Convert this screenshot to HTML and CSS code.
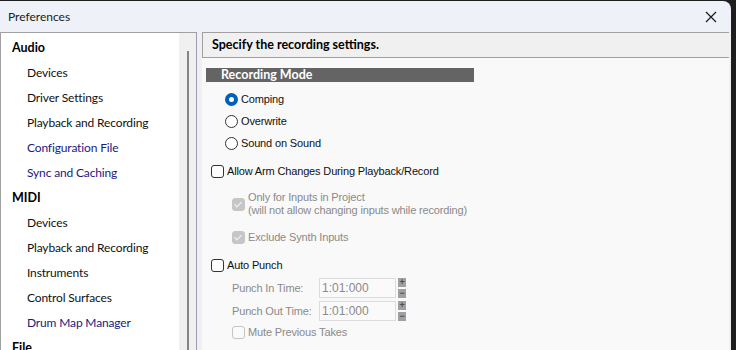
FILE: index.html
```html
<!DOCTYPE html>
<html lang="en">
<head>
    <meta charset="UTF-8">
    <title>Preferences</title>
    <link rel="stylesheet" href="styles.css">
</head>
<body>
    <div class="window">
        <div class="titlebar">
            <span class="title">Preferences</span>
            <svg class="close" width="12" height="12" viewBox="0 0 12 12">
                <path d="M1 1 L11 11 M11 1 L1 11" stroke="#1a1a1a" stroke-width="1.2"/>
            </svg>
        </div>

        <div class="panes">
            <div class="nav">
                <ul class="nav-list">
                    <li class="group">Audio</li>
                    <li>Devices</li>
                    <li>Driver Settings</li>
                    <li>Playback and Recording</li>
                    <li class="link">Configuration File</li>
                    <li class="link">Sync and Caching</li>
                    <li class="group">MIDI</li>
                    <li>Devices</li>
                    <li>Playback and Recording</li>
                    <li>Instruments</li>
                    <li>Control Surfaces</li>
                    <li class="link">Drum Map Manager</li>
                    <li class="group">File</li>
                </ul>
                <div class="scrollbar"><div class="thumb"></div></div>
            </div>

            <div class="main">
                <div class="header">Specify the recording settings.</div>
                <div class="content">
                    <div class="section-bar">Recording Mode</div>

                    <div class="radios">
                        <label class="opt"><span class="radio checked"></span>Comping</label>
                        <label class="opt"><span class="radio"></span>Overwrite</label>
                        <label class="opt"><span class="radio"></span>Sound on Sound</label>
                    </div>

                    <label class="opt check-row"><span class="box"></span>Allow Arm Changes During Playback/Record</label>

                    <div class="sub">
                        <label class="opt disabled two-line"><span class="box dis-checked"></span><span>Only for Inputs in Project<br>(will not allow changing inputs while recording)</span></label>
                        <label class="opt disabled excl"><span class="box dis-checked"></span>Exclude Synth Inputs</label>
                    </div>

                    <label class="opt check-row punch"><span class="box"></span>Auto Punch</label>

                    <div class="sub punch-fields">
                        <div class="field">
                            <span class="field-label">Punch In Time:</span>
                            <span class="time-input">1:01:000</span>
                            <span class="spin"><span class="spin-up">+</span><span class="spin-down">&minus;</span></span>
                        </div>
                        <div class="field">
                            <span class="field-label">Punch Out Time:</span>
                            <span class="time-input">1:01:000</span>
                            <span class="spin"><span class="spin-up">+</span><span class="spin-down">&minus;</span></span>
                        </div>
                        <label class="opt disabled mute"><span class="box dis-empty"></span>Mute Previous Takes</label>
                    </div>
                </div>
            </div>
        </div>
    </div>
</body>
</html>
```

FILE: styles.css
```css
* {
    margin: 0;
    padding: 0;
    box-sizing: border-box;
}

body {
    background: #1e1e1e;
    font-family: Lato, 'Noto Sans', sans-serif;
    font-size: 12px;
    color: #111;
    overflow: hidden;
}

.window {
    width: 731px;
    height: 352px;
    margin-top: 1px;
    background: #eff1f8;
    border-top-right-radius: 8px;
    display: flex;
    flex-direction: column;
    overflow: hidden;
}

.titlebar {
    height: 31px;
    display: flex;
    align-items: center;
    justify-content: space-between;
    padding: 0 14px 0 8px;
    flex-shrink: 0;
}

.title {
    font-size: 12px;
    color: #1a1a1a;
}

.close {
    margin-top: 1px;
}

.panes {
    flex: 1;
    display: flex;
    background: #f0f0f0;
}

/* left tree */
.nav {
    width: 197px;
    display: flex;
    background: #fff;
    border-top: 1px solid #a0a0a0;
    border-right: 1px solid #9a9ab4;
    border-left: 1px solid #a0a0a0;
}

.nav-list {
    list-style: none;
    flex: 1;
    padding-top: 2px;
}

.nav-list li {
    height: 25px;
    line-height: 25px;
    padding-left: 26px;
    white-space: nowrap;
    letter-spacing: -0.15px;
    color: #111;
}

.nav-list li.group {
    padding-left: 11px;
    font-weight: 700;
    font-size: 12.5px;
    letter-spacing: 0;
    color: #000;
}

.nav-list li.link {
    color: #1a1a80;
}

.scrollbar {
    width: 17px;
    background: #f0f0f0;
    display: flex;
    justify-content: center;
    padding-top: 18px;
}

.thumb {
    width: 2px;
    background: #858585;
}

/* right side */
.main {
    flex: 1;
    margin-left: 5px;
    margin-right: 2px;
    display: flex;
    flex-direction: column;
    background: #f9f9f9;
}

.header {
    height: 26px;
    background: #f0f0f0;
    border-top: 1px solid #a0a0a0;
    border-bottom: 1px solid #a0a0a0;
    border-left: 1px solid #a0a0a0;
    padding-left: 9px;
    line-height: 24px;
    font-weight: 700;
    font-size: 12.5px;
    color: #000;
}

.content {
    flex: 1;
    padding: 10px 0 0 4px;
    font-family: 'Liberation Sans', Arial, sans-serif;
    font-size: 11px;
    letter-spacing: -0.15px;
}

.section-bar {
    width: 268px;
    height: 14px;
    background: #646464;
    color: #fff;
    font-weight: 700;
    font-family: Lato, sans-serif;
    font-size: 12.5px;
    line-height: 14px;
    padding-left: 15px;
    letter-spacing: 0;
}

.opt {
    display: flex;
    align-items: center;
    gap: 3px;
    height: 22px;
    white-space: nowrap;
}

.radios {
    margin-top: 6px;
    padding-left: 19px;
}

.radio {
    width: 13px;
    height: 13px;
    border-radius: 50%;
    border: 1px solid #333;
    background: #fff;
    flex-shrink: 0;
}

.radio.checked {
    border: 4px solid #005fb8;
    background: #fff;
}

.box {
    width: 13px;
    height: 13px;
    border: 1px solid #333;
    border-radius: 3px;
    background: #fff;
    flex-shrink: 0;
    position: relative;
}

.check-row {
    padding-left: 5px;
    margin-top: 6px;
}

.sub {
    padding-left: 26px;
}

.disabled {
    color: #8a8a8a;
}

.two-line {
    height: auto;
    align-items: flex-start;
    margin-top: 9px;
    line-height: 13px;
}

.two-line .box {
    margin-top: 7px;
}

.excl {
    margin-top: 9px;
}

.box.dis-checked {
    background: #c6c6c6;
    border-color: #c6c6c6;
}

.box.dis-checked::after {
    content: "";
    position: absolute;
    left: 3px;
    top: 1px;
    width: 3px;
    height: 6px;
    border-right: 1.5px solid #f4f4f4;
    border-bottom: 1.5px solid #f4f4f4;
    transform: rotate(45deg);
}

.box.dis-empty {
    border-color: #c4c4c4;
    background: #fafafa;
}

.punch {
    margin-top: 6px;
}

.field {
    display: flex;
    align-items: center;
    height: 23px;
    color: #8a8a8a;
}

.field-label {
    width: 87px;
    white-space: nowrap;
}

.time-input {
    width: 77px;
    height: 20px;
    border: 1px solid #dcdcdc;
    background: #fafafa;
    line-height: 18px;
    padding-left: 2px;
    font-size: 12px;
    letter-spacing: 0;
    color: #8a8a8a;
}

.spin {
    display: flex;
    flex-direction: column;
    gap: 2px;
    margin-left: 2px;
}

.spin span {
    width: 8px;
    height: 9px;
    background: #a0a0a0;
    color: #505050;
    font-size: 9px;
    line-height: 9px;
    text-align: center;
    font-weight: 700;
}

.mute {
    margin-top: -1px;
}
```
